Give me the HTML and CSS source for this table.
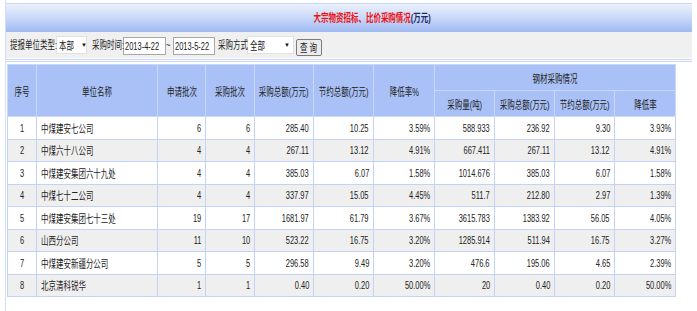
FILE: index.html
```html
<!DOCTYPE html>
<html lang="zh-CN">
<head>
    <meta charset="UTF-8">
    <title>大宗物资招标、比价采购情况</title>
    <link rel="stylesheet" href="styles.css">
</head>
<body>
    <div class="page">
        <div class="title">
            <i><b class="red">大宗物资招标、比价采购情况</b><b class="navy">(万元)</b></i>
        </div>

        <div class="filter">
            <span class="lbl w46"><i>提报单位类型:</i></span>
            <span class="sel w31"><i>本部</i><em>&#9660;</em></span>
            <span class="lbl w31 ml5"><i>采购时间:</i></span>
            <span class="inp w43"><i>2013-4-22</i></span>
            <span class="lbl w7"><i>~</i></span>
            <span class="inp w42"><i>2013-5-22</i></span>
            <span class="lbl w29 ml3"><i>采购方式</i></span>
            <span class="sel w47"><i>全部</i><em>&#9660;</em></span>
            <span class="btn"><i>查 询</i></span>
        </div>
        <div class="rule"></div>

        <table class="grid">
            <colgroup>
                <col style="width:29px"><col style="width:121px"><col style="width:48px"><col style="width:49px">
                <col style="width:59px"><col style="width:60px"><col style="width:61px"><col style="width:60px">
                <col style="width:60px"><col style="width:60px"><col style="width:61px">
            </colgroup>
            <thead>
                <tr>
                    <th rowspan="2"><i>序号</i></th>
                    <th rowspan="2"><i>单位名称</i></th>
                    <th rowspan="2"><i>申请批次</i></th>
                    <th rowspan="2"><i>采购批次</i></th>
                    <th rowspan="2"><i>采购总额(万元)</i></th>
                    <th rowspan="2"><i>节约总额(万元)</i></th>
                    <th rowspan="2"><i>降低率%</i></th>
                    <th colspan="4"><i>钢材采购情况</i></th>
                </tr>
                <tr>
                    <th><i>采购量(吨)</i></th>
                    <th><i>采购总额(万元)</i></th>
                    <th><i>节约总额(万元)</i></th>
                    <th><i>降低率</i></th>
                </tr>
            </thead>
            <tbody>
                <tr>
                    <td class="c"><i>1</i></td><td class="l"><i>中煤建安七公司</i></td>
                    <td><i>6</i></td><td><i>6</i></td><td><i>285.40</i></td><td><i>10.25</i></td><td><i>3.59%</i></td>
                    <td><i>588.933</i></td><td><i>236.92</i></td><td><i>9.30</i></td><td><i>3.93%</i></td>
                </tr>
                <tr>
                    <td class="c"><i>2</i></td><td class="l"><i>中煤六十八公司</i></td>
                    <td><i>4</i></td><td><i>4</i></td><td><i>267.11</i></td><td><i>13.12</i></td><td><i>4.91%</i></td>
                    <td><i>667.411</i></td><td><i>267.11</i></td><td><i>13.12</i></td><td><i>4.91%</i></td>
                </tr>
                <tr>
                    <td class="c"><i>3</i></td><td class="l"><i>中煤建安集团六十九处</i></td>
                    <td><i>4</i></td><td><i>4</i></td><td><i>385.03</i></td><td><i>6.07</i></td><td><i>1.58%</i></td>
                    <td><i>1014.676</i></td><td><i>385.03</i></td><td><i>6.07</i></td><td><i>1.58%</i></td>
                </tr>
                <tr>
                    <td class="c"><i>4</i></td><td class="l"><i>中煤七十二公司</i></td>
                    <td><i>4</i></td><td><i>4</i></td><td><i>337.97</i></td><td><i>15.05</i></td><td><i>4.45%</i></td>
                    <td><i>511.7</i></td><td><i>212.80</i></td><td><i>2.97</i></td><td><i>1.39%</i></td>
                </tr>
                <tr>
                    <td class="c"><i>5</i></td><td class="l"><i>中煤建安集团七十三处</i></td>
                    <td><i>19</i></td><td><i>17</i></td><td><i>1681.97</i></td><td><i>61.79</i></td><td><i>3.67%</i></td>
                    <td><i>3615.783</i></td><td><i>1383.92</i></td><td><i>56.05</i></td><td><i>4.05%</i></td>
                </tr>
                <tr>
                    <td class="c"><i>6</i></td><td class="l"><i>山西分公司</i></td>
                    <td><i>11</i></td><td><i>10</i></td><td><i>523.22</i></td><td><i>16.75</i></td><td><i>3.20%</i></td>
                    <td><i>1285.914</i></td><td><i>511.94</i></td><td><i>16.75</i></td><td><i>3.27%</i></td>
                </tr>
                <tr>
                    <td class="c"><i>7</i></td><td class="l"><i>中煤建安新疆分公司</i></td>
                    <td><i>5</i></td><td><i>5</i></td><td><i>296.58</i></td><td><i>9.49</i></td><td><i>3.20%</i></td>
                    <td><i>476.6</i></td><td><i>195.06</i></td><td><i>4.65</i></td><td><i>2.39%</i></td>
                </tr>
                <tr>
                    <td class="c"><i>8</i></td><td class="l"><i>北京清科锐华</i></td>
                    <td><i>1</i></td><td><i>1</i></td><td><i>0.40</i></td><td><i>0.20</i></td><td><i>50.00%</i></td>
                    <td><i>20</i></td><td><i>0.40</i></td><td><i>0.20</i></td><td><i>50.00%</i></td>
                </tr>
            </tbody>
        </table>
    </div>
</body>
</html>
```

FILE: styles.css
```css
body {
    margin: 0;
    font-family: "Liberation Sans", "Noto Sans CJK SC", sans-serif;
    font-size: 11px;
    color: #222;
    background: #fff;
}

/* the old page uses narrow glyphs, so text is squeezed sideways */
i {
    font-style: normal;
    display: inline-block;
    white-space: nowrap;
    transform: scaleX(.68);
    transform-origin: left center;
}

.page {
    margin-left: 5px;
    width: 686px;
    min-height: 308px;
    padding-top: 3px;
    border-left: 1px solid #d3def8;
}

.title {
    height: 28px;
    line-height: 28px;
    border-top: 1px solid #c8d6f8;
    background: linear-gradient(#ebf0fc 0%, #cddbf9 45%, #9fbaf3 100%);
    text-align: center;
    padding-left: 46px;
}

.title i {
    transform-origin: center;
    margin: 0 -30px;
}

.red {
    color: #ee1111;
}

.navy {
    color: #1c2a66;
}

.filter {
    display: flex;
    align-items: center;
    height: 26px;
    padding-left: 4px;
    background: #f0f0f0;
}

.lbl {
    height: 14px;
    line-height: 14px;
}

.w7 { width: 7px; }
.w29 { width: 29px; }
.w31 { width: 31px; }
.w42 { width: 42px; }
.w43 { width: 43px; }
.w46 { width: 46px; }
.w47 { width: 47px; }
.ml3 { margin-left: 3px; }
.ml5 { margin-left: 5px; }

.sel {
    display: flex;
    justify-content: space-between;
    align-items: center;
    height: 18px;
    padding: 0 3px 0 2px;
    box-sizing: border-box;
    background: #fff;
    border: 1px solid #e2e2e2;
}

.sel em {
    font-style: normal;
    font-size: 6px;
    color: #111;
}

.inp {
    display: flex;
    align-items: center;
    height: 18px;
    padding-left: 1px;
    box-sizing: border-box;
    background: #fff;
    border: 1px solid #a7a7a7;
    margin-top: 1px;
}

.btn {
    display: flex;
    align-items: center;
    justify-content: center;
    width: 26px;
    height: 17px;
    box-sizing: border-box;
    margin: 4px 0 0 2px;
    background: #ececec;
    border: 1px solid #7a7a7a;
    border-radius: 2px;
}

.btn i {
    transform-origin: center;
    margin: 0 -10px;
}

.rule {
    margin-top: 1px;
    border-top: 3px double #c6d5f8;
}

.grid {
    margin: 2px 0 0 1px;
    width: 668px;
    table-layout: fixed;
    border-collapse: collapse;
}

.grid th,
.grid td {
    border: 1px solid #c3d2f7;
    padding: 0 4px;
    white-space: nowrap;
    overflow: visible;
}

.grid th {
    height: 25px;
    background: #a9c1f6;
    border-color: #c8d7fa;
    font-weight: normal;
    text-align: center;
    color: #222;
}

.grid th i,
.grid td.c i {
    transform-origin: center;
    margin: 0 -20px;
}

.grid td {
    height: 21.5px;
    text-align: right;
}

.grid td i {
    transform-origin: right center;
}

.grid td.c {
    text-align: center;
}

.grid td.l {
    text-align: left;
}

.grid td.l i {
    transform-origin: left center;
}

.grid tbody tr:nth-child(even) td {
    background: #efefef;
}
```
